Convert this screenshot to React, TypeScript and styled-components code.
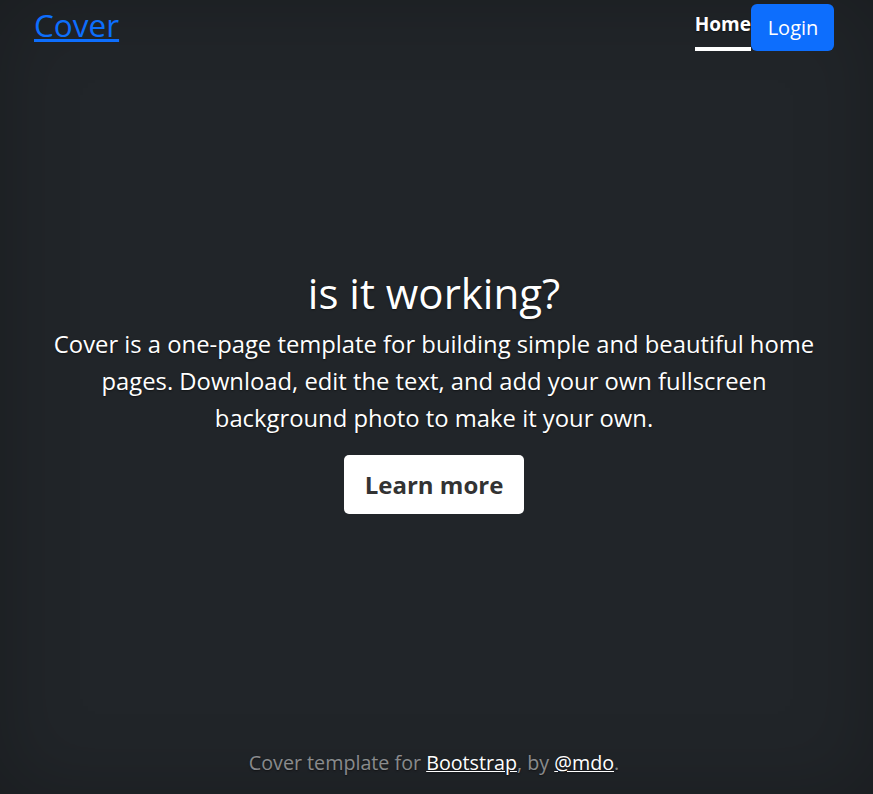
import React from "react";
import styled, { createGlobalStyle } from "styled-components";

const Global = createGlobalStyle`
  html, body { margin: 0; padding: 0; height: 100%; }
  body {
    background: #212529;
    color: #fff;
    font-family: "Open Sans", "Noto Sans", sans-serif;
    box-shadow: inset 0 0 5rem rgba(0,0,0,.22);
    text-shadow: 0 .05rem .1rem rgba(0,0,0,.5);
  }
  #root { min-height: 100%; display: flex; }
`;

const Page = styled.div`
  flex: 1;
  min-height: 794px;
  display: flex;
  flex-direction: column;
  box-sizing: border-box;
  padding: 0 39px 0 34px;
`;

const Header = styled.header`
  display: flex;
  justify-content: space-between;
  align-items: flex-start;
`;

const Brand = styled.a`
  font-size: 31.5px;
  line-height: 42px;
  margin-top: 4px;
  color: #0d6efd;
  text-decoration: underline;
  text-shadow: none;
`;

const Nav = styled.nav`
  display: flex;
  align-items: flex-start;
  margin-top: 4px;
`;

const NavLink = styled.a<{ $active?: boolean }>`
  font-size: 19px;
  font-weight: 700;
  color: #fff;
  text-decoration: none;
  padding-top: 7px;
  height: 36px;
  box-sizing: content-box;
  border-bottom: 4px solid ${p => (p.$active ? "#fff" : "transparent")};
  line-height: 26px;
`;

const LoginButton = styled.button`
  background: #0d6efd;
  color: #fff;
  border: none;
  border-radius: 6px;
  font-family: inherit;
  font-size: 20px;
  height: 47px;
  width: 83px;
  padding: 0 0 0 1px;
  cursor: pointer;
  text-shadow: none;
`;

const Main = styled.main`
  margin: auto 0;
  text-align: center;
  padding-bottom: 18px;
`;

const Title = styled.h1`
  font-size: 42px;
  font-weight: 400;
  line-height: 50px;
  margin: 0 0 8px;
`;

const Lead = styled.p`
  font-size: 23.8px;
  line-height: 37px;
  margin: 0 auto 18px;
  max-width: 772px;
`;

const LearnButton = styled.a`
  display: inline-block;
  background: #fff;
  color: #333;
  font-size: 24px;
  font-weight: 700;
  border-radius: 5px;
  padding: 0 21px;
  height: 59px;
  line-height: 59px;
  text-decoration: none;
  text-shadow: none;
`;

const Footer = styled.footer`
  text-align: center;
  color: rgba(255,255,255,.5);
  font-size: 19.7px;
  line-height: 27px;
  padding-bottom: 18px;
`;

const FooterLink = styled.a`
  color: #fff;
  text-decoration: underline;
`;

export default function App() {
  return (
    <>
      <Global />
      <Page>
        <Header>
          <Brand href="#">Cover</Brand>
          <Nav>
            <NavLink $active href="#">Home</NavLink>
            <LoginButton>Login</LoginButton>
          </Nav>
        </Header>
        <Main>
          <Title>is it working?</Title>
          <Lead>
            Cover is a one-page template for building simple and beautiful home pages. Download, edit the text, and add your own fullscreen background photo to make it your own.
          </Lead>
          <LearnButton href="#">Learn more</LearnButton>
        </Main>
        <Footer>
          Cover template for <FooterLink href="#">Bootstrap</FooterLink>, by <FooterLink href="#">@mdo</FooterLink>.
        </Footer>
      </Page>
    </>
  );
}
